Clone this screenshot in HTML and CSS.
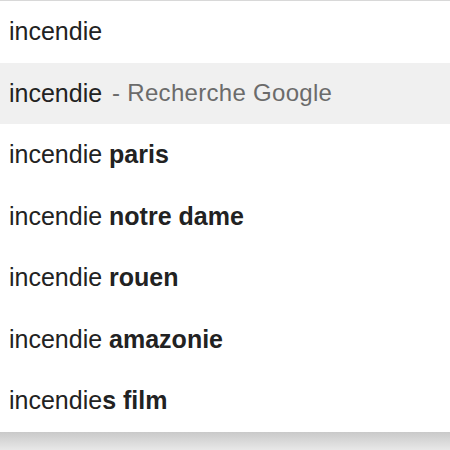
FILE: index.html
```html
<!DOCTYPE html>
<html lang="fr">
<head>
<meta charset="utf-8">
<title>incendie</title>
<link rel="stylesheet" href="styles.css">
</head>
<body>
<div class="popup">
  <div class="row input">incendie</div>
  <ul class="list">
    <li class="row selected">incendie <span class="hint">- Recherche Google</span></li>
    <li class="row">incendie <b>paris</b></li>
    <li class="row">incendie <b>notre dame</b></li>
    <li class="row">incendie <b>rouen</b></li>
    <li class="row">incendie <b>amazonie</b></li>
    <li class="row">incendie<b>s film</b></li>
  </ul>
</div>
<div class="shade"></div>
</body>
</html>
```

FILE: styles.css
```css
html, body {
  margin: 0;
  padding: 0;
  width: 450px;
  height: 450px;
  overflow: hidden;
  font-family: "Liberation Sans", Arial, sans-serif;
}
body {
  display: flex;
  flex-direction: column;
  background: #e6e6e6;
}
.popup {
  background: #fff;
  border-top: 1px solid #d8d8d8;
  display: flex;
  flex-direction: column;
}
.shade {
  flex: 1;
  background: linear-gradient(#c9c9c9, #e8e8e8);
}
.list {
  list-style: none;
  margin: 0;
  padding: 0;
}
.row {
  height: 61.5px;
  display: flex;
  align-items: center;
  padding-left: 9px;
  font-size: 25px;
  color: #222;
  white-space: pre;
}
.row b {
  font-weight: bold;
  color: #222;
}
.selected {
  background: #f0f0f0;
}
.hint {
  color: #6b6b6b;
  font-size: 24px;
  margin-left: 3px;
  letter-spacing: 0.3px;
}
```
